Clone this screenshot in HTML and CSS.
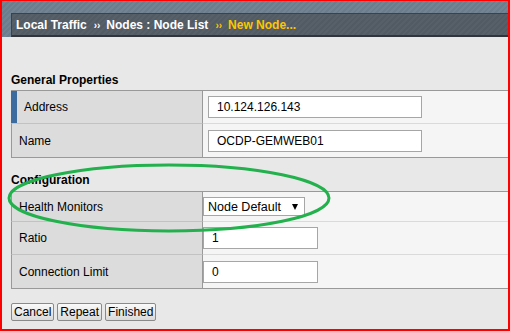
FILE: index.html
```html
<!DOCTYPE HTML>
<html lang="en">

<head>
    <meta charset="utf-8">
    <meta name="viewport" content="width=device-width, initial-scale=1">
    <title>New Node</title>

    <link rel="stylesheet" href="styles.css">
</head>

<body>
    <div class="frame">
        <!-- Breadcrumb banner -->
        <div class="banner">
            <div class="crumbs">
                <span>Local Traffic</span>
                <span class="sep">››</span>
                <span>Nodes : Node List</span>
                <span class="sep current">››</span>
                <span class="current">New Node...</span>
            </div>
        </div>

        <div class="content">
            <div class="section-title">General Properties</div>
            <div class="props">
                <div class="row h32">
                    <div class="label active">Address</div>
                    <div class="value padded"><input type="text" class="field wide" value="10.124.126.143"></div>
                </div>
                <div class="row h34">
                    <div class="label">Name</div>
                    <div class="value padded"><input type="text" class="field wide" value="OCDP-GEMWEB01"></div>
                </div>
            </div>

            <div class="section-title second">Configuration</div>
            <div class="props">
                <div class="row h29">
                    <div class="label">Health Monitors</div>
                    <div class="value">
                        <div class="select-box">
                            <span>Node Default</span>
                            <span class="arrow"></span>
                        </div>
                    </div>
                </div>
                <div class="row h33">
                    <div class="label">Ratio</div>
                    <div class="value"><input type="text" class="field short" value="1"></div>
                </div>
                <div class="row h34">
                    <div class="label">Connection Limit</div>
                    <div class="value"><input type="text" class="field short" value="0"></div>
                </div>
            </div>

            <div class="buttons">
                <button>Cancel</button>
                <button>Repeat</button>
                <button>Finished</button>
            </div>
        </div>

        <!-- Hand-drawn highlight round the Health Monitors row -->
        <svg class="highlight" width="330" height="76" viewBox="0 0 330 76">
            <ellipse cx="165" cy="37" rx="160" ry="33" fill="none" stroke="#22b14c" stroke-width="3"/>
        </svg>
    </div>
</body>

</html>
```

FILE: styles.css
```css
body {
    margin: 0;
    font-family: "Liberation Sans", Arial, sans-serif;
    font-size: 12px;
    color: #000;
}

.frame {
    position: relative; /* anchor for the highlight ellipse */
    width: 510px;
    height: 331px;
    box-sizing: border-box;
    border: 2px solid #ff0000;
    border-top-width: 1px;
    background-color: #e8e8e8;
    overflow: hidden;
}

/* Banner */
.banner {
    height: 36px;
    box-sizing: border-box;
    padding: 12px 0 0 9px;
    background: repeating-linear-gradient(135deg, #6c7d8d 0px, #6c7d8d 2px, #738494 2px, #738494 4px);
}

.crumbs {
    display: flex;
    align-items: baseline;
    height: 24px;
    box-sizing: border-box;
    padding: 4px 0 0 4px;
    border-top: 1px solid #3c4249;
    border-left: 1px solid #3c4249;
    border-bottom: 2px solid #30353b;
    background: repeating-linear-gradient(135deg, #525a64 0px, #525a64 2px, #575f69 2px, #575f69 4px);
    color: #fff;
    font-weight: bold;
    line-height: 14px;
    white-space: nowrap;
}

.crumbs .sep {
    font-size: 10px;
    margin: 0 6px 0 7px;
}

.crumbs .current {
    color: #ffc600;
}

/* Page content */
.content {
    padding-left: 9px;
}

.section-title {
    font-weight: bold;
    line-height: 14px;
    margin: 36px 0 3px;
}

.section-title.second {
    margin: 15px 0 4px;
}

.props {
    border-top: 1px solid #999;
    border-bottom: 1px solid #999;
}

.row {
    display: flex;
}

.row.h29 { height: 29px; }
.row.h32 { height: 32px; }
.row.h33 { height: 33px; }
.row.h34 { height: 34px; }

.label {
    width: 192px;
    box-sizing: border-box;
    display: flex;
    align-items: center;
    padding-left: 7px;
    background-color: #dcdcdc;
    border-left: 1px solid #999;
    border-right: 1px solid #999;
}

.label.active {
    border-left: 6px solid #3b6b9f; /* selected row marker */
}

.value {
    flex: 1;
    display: flex;
    align-items: center;
    box-sizing: border-box;
    background-color: #f5f5f5;
}

.value.padded {
    padding-left: 5px;
}

.row + .row .label {
    border-top: 1px solid #c2c2c2;
}

.row + .row .value {
    border-top: 1px solid #dadada;
}

.field {
    height: 22px;
    box-sizing: border-box;
    margin: 0;
    padding: 0 8px;
    border: 1px solid #a6a6a6;
    background-color: #fff;
    font-family: "Liberation Sans", Arial, sans-serif;
    font-size: 12px;
    color: #000;
}

.field.wide {
    width: 214px;
}

.field.short {
    width: 115px;
}

.select-box {
    display: flex;
    align-items: center;
    justify-content: space-between;
    width: 102px;
    height: 19px;
    box-sizing: border-box;
    padding: 0 6px 0 4px;
    border: 1px solid #a6a6a6;
    background-color: #fff;
    font-size: 12.5px;
}

.select-box .arrow {
    width: 0;
    height: 0;
    border-left: 3.5px solid transparent;
    border-right: 3.5px solid transparent;
    border-top: 6px solid #000;
    margin-top: 1px;
}

.buttons {
    display: flex;
    gap: 3px;
    margin-top: 14px;
}

.buttons button {
    height: 18px;
    margin: 0;
    padding: 0 2px;
    border: 1px solid #8a8a8a;
    border-radius: 2px;
    background: linear-gradient(#fafafa, #dadada);
    font-family: "Liberation Sans", Arial, sans-serif;
    font-size: 12px;
    color: #000;
}

.highlight {
    position: absolute;
    left: 2px;
    top: 160px;
    pointer-events: none;
}
```
